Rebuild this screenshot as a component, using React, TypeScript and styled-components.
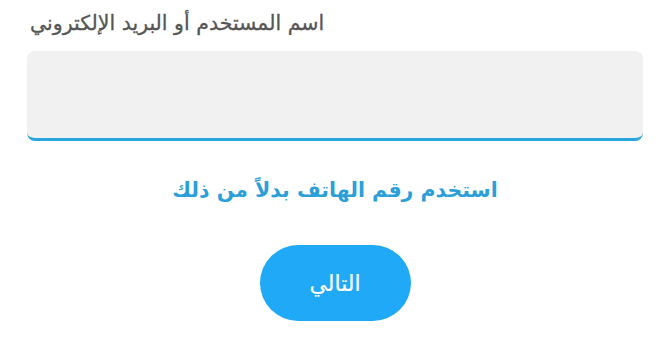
import React from "react";
import styled, { createGlobalStyle } from "styled-components";

const Global = createGlobalStyle`
  html, body { margin: 0; padding: 0; background: #ffffff; }
  body { font-family: "DejaVu Sans", "Noto Sans", sans-serif; }
`;

const Page = styled.div`
  width: 660px;
  height: 341px;
  box-sizing: border-box;
  padding: 8px 17px 0 27px;
  display: flex;
  flex-direction: column;
`;

const Label = styled.label`
  align-self: flex-start;
  padding-left: 3px;
  font-size: 20.5px;
  line-height: 30px;
  color: #555555;
  -webkit-text-stroke: 0.3px #555555;
`;

const Field = styled.input`
  margin-top: 13px;
  height: 90px;
  box-sizing: border-box;
  border: none;
  border-bottom: 3px solid #2aa6df;
  border-radius: 8px;
  background: #f1f1f1;
  outline: none;
  font-size: 18px;
  padding: 0 14px;
  direction: rtl;
`;

const Link = styled.a`
  margin-top: 34px;
  align-self: center;
  font-size: 20.5px;
  font-weight: bold;
  line-height: 30px;
  color: #2d9fd8;
  text-decoration: none;
  cursor: pointer;
`;

const NextButton = styled.button`
  margin-top: 40px;
  align-self: center;
  width: 151px;
  height: 76px;
  border: none;
  border-radius: 38px;
  background: #1fa9f6;
  color: #ffffff;
  font-family: "DejaVu Sans", sans-serif;
  font-size: 22px;
  -webkit-text-stroke: 0.2px #ffffff;
  cursor: pointer;
`;

export default function App() {
  return (
    <>
      <Global />
      <Page>
        <Label dir="rtl">اسم المستخدم أو البريد الإلكتروني</Label>
        <Field type="text" />
        <Link dir="rtl">استخدم رقم الهاتف بدلاً من ذلك</Link>
        <NextButton dir="rtl">التالي</NextButton>
      </Page>
    </>
  );
}
